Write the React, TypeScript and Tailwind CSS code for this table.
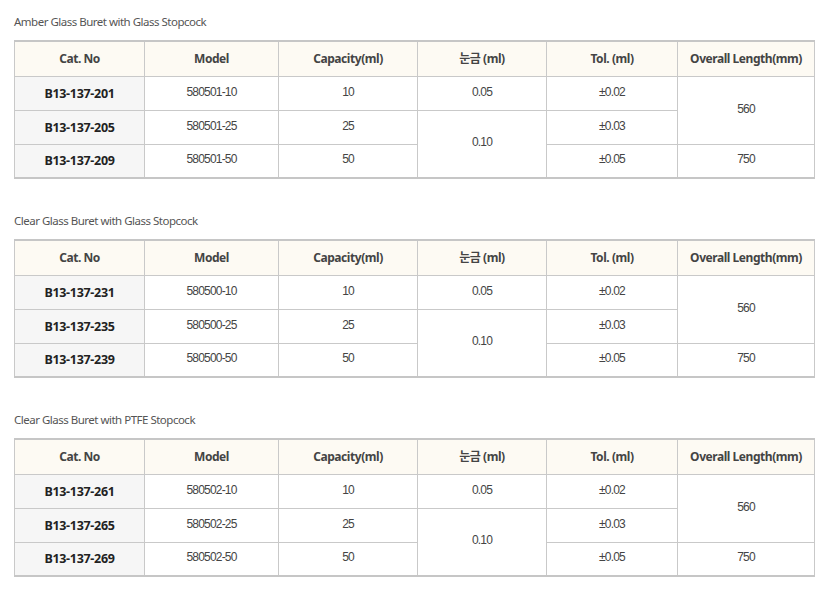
import React from "react";

type Row = { cat: string; model: string; cap: string; tol: string };

const sections: { title: string; rows: Row[] }[] = [
  {
    title: "Amber Glass Buret with Glass Stopcock",
    rows: [
      { cat: "B13-137-201", model: "580501-10", cap: "10", tol: "±0.02" },
      { cat: "B13-137-205", model: "580501-25", cap: "25", tol: "±0.03" },
      { cat: "B13-137-209", model: "580501-50", cap: "50", tol: "±0.05" },
    ],
  },
  {
    title: "Clear Glass Buret with Glass Stopcock",
    rows: [
      { cat: "B13-137-231", model: "580500-10", cap: "10", tol: "±0.02" },
      { cat: "B13-137-235", model: "580500-25", cap: "25", tol: "±0.03" },
      { cat: "B13-137-239", model: "580500-50", cap: "50", tol: "±0.05" },
    ],
  },
  {
    title: "Clear Glass Buret with PTFE Stopcock",
    rows: [
      { cat: "B13-137-261", model: "580502-10", cap: "10", tol: "±0.02" },
      { cat: "B13-137-265", model: "580502-25", cap: "25", tol: "±0.03" },
      { cat: "B13-137-269", model: "580502-50", cap: "50", tol: "±0.05" },
    ],
  },
];

const th =
  "border border-[#c9c9c9] bg-[#fdfaf3] text-[12px] font-bold text-[#444] text-center align-middle p-0 tracking-[-0.45px]";
const td =
  "border border-[#c9c9c9] bg-white text-[12px] text-[#444] text-center align-middle p-0 pb-[3px] tracking-[-0.8px] font-['Liberation_Sans',sans-serif]";
const catTd =
  "border border-[#c9c9c9] bg-[#f6f6f6] text-[12.5px] font-bold text-[#222] text-center align-middle p-0 pt-[2px] tracking-[-0.3px]";

function Section({ title, rows }: { title: string; rows: Row[] }) {
  return (
    <div className="flex flex-col">
      <div className="h-[40px] pl-[14px] pt-[14px] text-[11.5px] text-[#555] leading-[16px] tracking-[-0.5px]">
        {title}
      </div>
      <div className="pl-[14px]">
        <table className="w-[800px] border-collapse table-fixed border-t-2 border-b-2 border-t-[#c6c6c6] border-b-[#c6c6c6]">
          <colgroup>
            <col className="w-[130px]" />
            <col className="w-[134px]" />
            <col className="w-[139px]" />
            <col className="w-[129px]" />
            <col className="w-[131px]" />
            <col className="w-[137px]" />
          </colgroup>
          <thead>
            <tr className="h-[35px]">
              <th className={th}>Cat. No</th>
              <th className={th}>Model</th>
              <th className={th}>Capacity(ml)</th>
              <th className={th}>눈금 (ml)</th>
              <th className={th}>Tol. (ml)</th>
              <th className={th}>Overall Length(mm)</th>
            </tr>
          </thead>
          <tbody>
            {rows.map((r, i) => (
              <tr key={r.cat} className="h-[34px]">
                <td className={catTd}>{r.cat}</td>
                <td className={td}>{r.model}</td>
                <td className={td}>{r.cap}</td>
                {i === 0 && <td className={td}>0.05</td>}
                {i === 1 && (
                  <td rowSpan={2} className={td}>
                    0.10
                  </td>
                )}
                <td className={td}>{r.tol}</td>
                {i === 0 && (
                  <td rowSpan={2} className={td}>
                    560
                  </td>
                )}
                {i === 2 && <td className={td}>750</td>}
              </tr>
            ))}
          </tbody>
        </table>
      </div>
    </div>
  );
}

export default function App() {
  return (
    <div className="w-[825px] h-[591px] bg-white flex flex-col gap-[20px] font-['Noto_Sans','Noto_Sans_CJK_KR',sans-serif]">
      {sections.map((s) => (
        <Section key={s.title} title={s.title} rows={s.rows} />
      ))}
    </div>
  );
}
